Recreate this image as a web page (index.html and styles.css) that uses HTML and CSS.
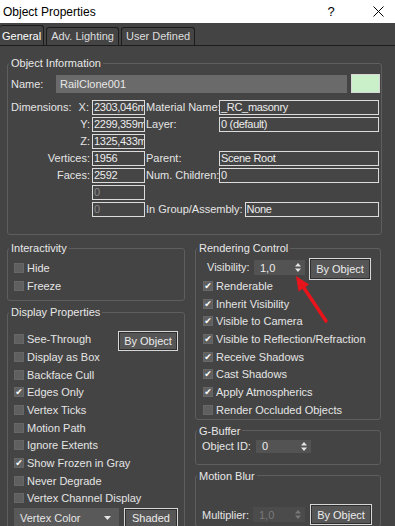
FILE: index.html
```html
<!DOCTYPE html>
<html lang="en">
<head>
    <meta charset="UTF-8">
    <title>Object Properties</title>
    <link rel="stylesheet" href="styles.css">
</head>
<body>

    <div class="titlebar">
        <span class="titlebar__title">Object Properties</span>
        <span class="titlebar__help">?</span>
        <span class="titlebar__close">
            <svg width="11" height="11" viewBox="0 0 11 11"><path d="M0.5 0.5 L10.5 10.5 M10.5 0.5 L0.5 10.5" stroke="#000" stroke-width="1"/></svg>
        </span>
    </div>

    <div class="tabs">
        <span class="tabs__tab is-active">General</span>
        <span class="tabs__tab">Adv. Lighting</span>
        <span class="tabs__tab">User Defined</span>
    </div>

    <div class="panel">
        <fieldset class="group">
            <legend class="group__title">Object Information</legend>
            <div class="name-row">
                <span class="name-row__label">Name:</span>
                <span class="name-row__input">RailClone001</span>
                <span class="name-row__swatch"></span>
            </div>
            <div class="info-grid">
                <span class="info-grid__label info-grid__label--split"><span>Dimensions:</span><span>X:</span></span>
                <span class="field">2303,046m</span>
                <span class="info-grid__label2">Material Name:</span>
                <span class="field">_RC_masonry</span>

                <span class="info-grid__label">Y:</span>
                <span class="field">2299,359m</span>
                <span class="info-grid__label2">Layer:</span>
                <span class="field">0 (default)</span>

                <span class="info-grid__label">Z:</span>
                <span class="field">1325,433m</span>
                <span></span>
                <span></span>

                <span class="info-grid__label">Vertices:</span>
                <span class="field">1956</span>
                <span class="info-grid__label2">Parent:</span>
                <span class="field">Scene Root</span>

                <span class="info-grid__label">Faces:</span>
                <span class="field">2592</span>
                <span class="info-grid__label2">Num. Children:</span>
                <span class="field">0</span>

                <span></span>
                <span class="field is-dim">0</span>
                <span></span>
                <span></span>

                <span></span>
                <span class="field is-dim">0</span>
                <span class="info-grid__assembly">
                    <span>In Group/Assembly:</span>
                    <span class="field">None</span>
                </span>
            </div>
        </fieldset>

        <div class="columns">
            <div class="columns__col">
                <fieldset class="group group--interactivity">
                    <legend class="group__title">Interactivity</legend>
                    <div class="checklist">
                        <label class="check"><span class="check__box"></span>Hide</label>
                        <label class="check"><span class="check__box"></span>Freeze</label>
                    </div>
                </fieldset>

                <fieldset class="group group--display">
                    <legend class="group__title">Display Properties</legend>
                    <div class="display-top">
                        <div class="checklist">
                            <label class="check"><span class="check__box"></span>See-Through</label>
                            <label class="check"><span class="check__box"></span>Display as Box</label>
                            <label class="check"><span class="check__box"></span>Backface Cull</label>
                            <label class="check is-on"><span class="check__box"></span>Edges Only</label>
                            <label class="check"><span class="check__box"></span>Vertex Ticks</label>
                            <label class="check"><span class="check__box"></span>Motion Path</label>
                            <label class="check"><span class="check__box"></span>Ignore Extents</label>
                            <label class="check is-on"><span class="check__box"></span>Show Frozen in Gray</label>
                            <label class="check"><span class="check__box"></span>Never Degrade</label>
                            <label class="check"><span class="check__box"></span>Vertex Channel Display</label>
                        </div>
                        <span class="btn btn--display">By Object</span>
                    </div>
                    <div class="display-bottom">
                        <span class="dropdown">Vertex Color
                            <svg width="7" height="4" viewBox="0 0 7 4"><path d="M0 0 L7 0 L3.5 4Z" fill="#e6e6e6"/></svg>
                        </span>
                        <span class="btn btn--shaded">Shaded</span>
                    </div>
                </fieldset>
            </div>

            <div class="columns__col">
                <fieldset class="group group--render">
                    <legend class="group__title">Rendering Control</legend>
                    <div class="vis-row">
                        <span class="vis-row__label">Visibility:</span>
                        <span class="spinner spinner--vis">1,0
                            <svg width="6" height="9" viewBox="0 0 6 9"><path d="M0 3.5 L3 0 L6 3.5Z M0 5.5 L3 9 L6 5.5Z" fill="#e6e6e6"/></svg>
                        </span>
                        <span class="btn btn--vis">By Object</span>
                    </div>
                    <div class="checklist checklist--render">
                        <label class="check is-on"><span class="check__box"></span>Renderable</label>
                        <label class="check is-on"><span class="check__box"></span>Inherit Visibility</label>
                        <label class="check is-on"><span class="check__box"></span>Visible to Camera</label>
                        <label class="check is-on"><span class="check__box"></span>Visible to Reflection/Refraction</label>
                        <label class="check is-on"><span class="check__box"></span>Receive Shadows</label>
                        <label class="check is-on"><span class="check__box"></span>Cast Shadows</label>
                        <label class="check is-on"><span class="check__box"></span>Apply Atmospherics</label>
                        <label class="check"><span class="check__box"></span>Render Occluded Objects</label>
                    </div>
                </fieldset>

                <fieldset class="group group--gbuffer">
                    <legend class="group__title">G-Buffer</legend>
                    <div class="id-row">
                        <span class="id-row__label">Object ID:</span>
                        <span class="spinner spinner--id">0
                            <svg width="6" height="9" viewBox="0 0 6 9"><path d="M0 3.5 L3 0 L6 3.5Z M0 5.5 L3 9 L6 5.5Z" fill="#e6e6e6"/></svg>
                        </span>
                    </div>
                </fieldset>

                <fieldset class="group group--blur">
                    <legend class="group__title">Motion Blur</legend>
                    <div class="blur-row">
                        <span class="blur-row__label">Multiplier:</span>
                        <span class="spinner spinner--blur is-disabled">1,0
                            <svg width="6" height="9" viewBox="0 0 6 9"><path d="M0 3.5 L3 0 L6 3.5Z M0 5.5 L3 9 L6 5.5Z" fill="#7a7a7a"/></svg>
                        </span>
                        <span class="btn btn--blur">By Object</span>
                    </div>
                </fieldset>
            </div>
        </div>
    </div>

    <!-- red annotation arrow over the visibility spinner -->
    <svg class="arrow" width="395" height="526" viewBox="0 0 395 526">
        <line x1="326" y1="321" x2="304" y2="288" stroke="#e8141c" stroke-width="3.5" stroke-linecap="round"/>
        <polygon points="296,276 309,284.5 298.5,291.5" fill="#e8141c"/>
    </svg>

</body>
</html>
```

FILE: styles.css
```css
/* Page */
body {
    margin: 0;
    width: 395px;
    height: 526px;
    overflow: hidden;
    position: relative;
    background: #444444;
    color: #e4e4e4;
    font-family: "Liberation Sans", Arial, sans-serif;
    font-size: 11px;
}

/* Title bar */
.titlebar {
    height: 23px;
    background: #fff;
    color: #000;
    display: flex;
    align-items: center;
    padding-left: 3px;
    font-size: 12px;
}

.titlebar__title {
    flex: 1;
}

.titlebar__help {
    width: 14px;
    margin-right: 23px;
    text-align: center;
    font-size: 13px;
}

.titlebar__close {
    width: 34px;
    display: flex;
    justify-content: center;
}

/* Tabs */
.tabs {
    height: 22px;
    display: flex;
    align-items: flex-end;
    border-bottom: 1px solid #1c1c1c;
}

.tabs__tab {
    height: 17px;
    line-height: 17px;
    padding: 0 4px;
    margin-left: 2px;
    border: 1px solid #1c1c1c;
    border-bottom: none;
    border-radius: 3px 3px 0 0;
    color: #dedede;
}

.tabs__tab.is-active {
    margin-left: 0;
    height: 19px;
    line-height: 20px;
    padding: 0 2px 0 2px;
    border-left: none;
    color: #fff;
}

/* Panel */
.panel {
    padding: 10px 13px 0 7px;
}

/* Group boxes */
.group {
    margin: 0;
    border: 1px solid #5e5e5e;
    border-radius: 3px;
    padding: 4px 1px 17px 3px;
    min-width: 0;
}

.group__title {
    padding: 0 2px;
    margin-left: -2px;
    line-height: 14px;
    color: #e8e8e8;
}

/* Name row */
.name-row {
    display: flex;
    align-items: center;
    height: 19px;
}

.name-row__label {
    width: 45px;
}

.name-row__input {
    width: 287px;
    height: 18px;
    line-height: 18px;
    padding-left: 4px;
    background: #6a6a6a;
    color: #e8e8e8;
}

.name-row__swatch {
    width: 27px;
    height: 17px;
    margin-left: 4px;
    background: #c9f0c8;
    border: 1px solid #d8d8d8;
}

/* Object information grid */
.info-grid {
    margin-top: 7px;
    display: grid;
    grid-template-columns: 80px 53px 72px 160px;
    grid-template-rows: repeat(7, 15px);
    column-gap: 1px;
    row-gap: 2px;
}

.info-grid__label {
    text-align: right;
    line-height: 15px;
    padding-right: 1px;
}

.info-grid__label--split {
    display: flex;
    justify-content: space-between;
    text-align: left;
    padding-right: 2px;
}

.info-grid__label2 {
    line-height: 15px;
    white-space: nowrap;
}

.info-grid__assembly {
    grid-column: 3 / 5;
    display: flex;
    line-height: 15px;
    white-space: nowrap;
}

.info-grid__assembly .field {
    margin-left: 2px;
    flex: 1;
}

/* Text field */
.field {
    height: 13px;
    line-height: 13px;
    border: 1px solid #dcdcdc;
    background: #454545;
    color: #ececec;
    padding-left: 1px;
    overflow: hidden;
    white-space: nowrap;
    letter-spacing: -0.3px;
}

.field.is-dim {
    color: #8a8a8a;
}

/* Two lower columns */
.columns {
    margin-top: 6px;
    display: grid;
    grid-template-columns: 178px 186px;
    column-gap: 10px;
}

.columns__col {
    display: flex;
    flex-direction: column;
    gap: 4px;
}

.group--interactivity {
    padding-bottom: 6px;
}

.group--display {
    padding-top: 11px;
    padding-bottom: 0;
    height: 215px;
}

/* Checkboxes */
.checklist {
    padding-left: 3px;
}

.check {
    display: flex;
    align-items: center;
    height: 17.7px;
    white-space: nowrap;
}

.check__box {
    width: 10px;
    height: 10px;
    margin-right: 3px;
    background: #5f5f5f;
    box-shadow: inset 0 0 0 1px #676767;
    display: flex;
    align-items: center;
    justify-content: center;
    flex-shrink: 0;
}

.check.is-on .check__box::after {
    content: "\2714";
    font-family: "DejaVu Sans", sans-serif;
    font-size: 9px;
    line-height: 10px;
    color: #fff;
}

/* Buttons */
.btn {
    box-sizing: border-box;
    display: flex;
    align-items: center;
    justify-content: center;
    flex-shrink: 0;
    background: #565656;
    border: 1px solid #d6d6d6;
    box-shadow: inset 0 0 0 1px #2e2e2e;
    color: #ececec;
    white-space: nowrap;
}

.display-top {
    display: flex;
    align-items: flex-start;
}

.display-top .checklist {
    flex: 1;
    min-width: 0;
}

.btn--display {
    width: 60px;
    height: 20px;
    margin-top: 1px;
    margin-right: 5px;
}

.display-bottom {
    display: flex;
    align-items: flex-start;
    margin-top: 1px;
    padding-left: 3px;
}

.dropdown {
    width: 105px;
    height: 20px;
    box-sizing: border-box;
    padding: 0 8px 0 6px;
    background: #595959;
    display: flex;
    align-items: center;
    justify-content: space-between;
    color: #e6e6e6;
}

.btn--shaded {
    width: 54px;
    height: 20px;
    margin-left: 5px;
}

/* Rendering control */
.group--render {
    padding-top: 3px;
    padding-bottom: 0;
}

.vis-row {
    display: flex;
    align-items: flex-start;
    height: 19px;
    padding-left: 8px;
}

.vis-row__label {
    width: 47px;
    line-height: 18px;
}

.spinner {
    box-sizing: border-box;
    height: 15px;
    display: flex;
    align-items: center;
    justify-content: space-between;
    padding: 0 4px 0 6px;
    background: #535353;
    color: #ececec;
}

.spinner--vis {
    width: 51px;
    margin-top: 2px;
}

.btn--vis {
    width: 62px;
    height: 22px;
    margin-left: 4px;
}

.checklist--render {
    padding-left: 4px;
}

/* G-Buffer */
.group--gbuffer {
    padding-top: 1px;
    padding-bottom: 10px;
}

.id-row {
    display: flex;
    align-items: center;
    height: 15px;
    padding-left: 3px;
}

.id-row__label {
    width: 54px;
}

.spinner--id {
    width: 55px;
    height: 13px;
}

/* Motion blur */
.group--blur {
    padding-top: 22px;
    padding-bottom: 0;
    height: 34px;
}

.blur-row {
    display: flex;
    align-items: center;
    height: 20px;
    padding-left: 3px;
}

.blur-row__label {
    width: 51px;
}

.spinner--blur {
    width: 52px;
}

.spinner.is-disabled {
    background: #4b4b4b;
    color: #7a7a7a;
}

.btn--blur {
    width: 62px;
    height: 21px;
    margin-left: 5px;
}

/* Annotation overlay */
.arrow {
    position: absolute;
    left: 0;
    top: 0;
    pointer-events: none;
}
```
